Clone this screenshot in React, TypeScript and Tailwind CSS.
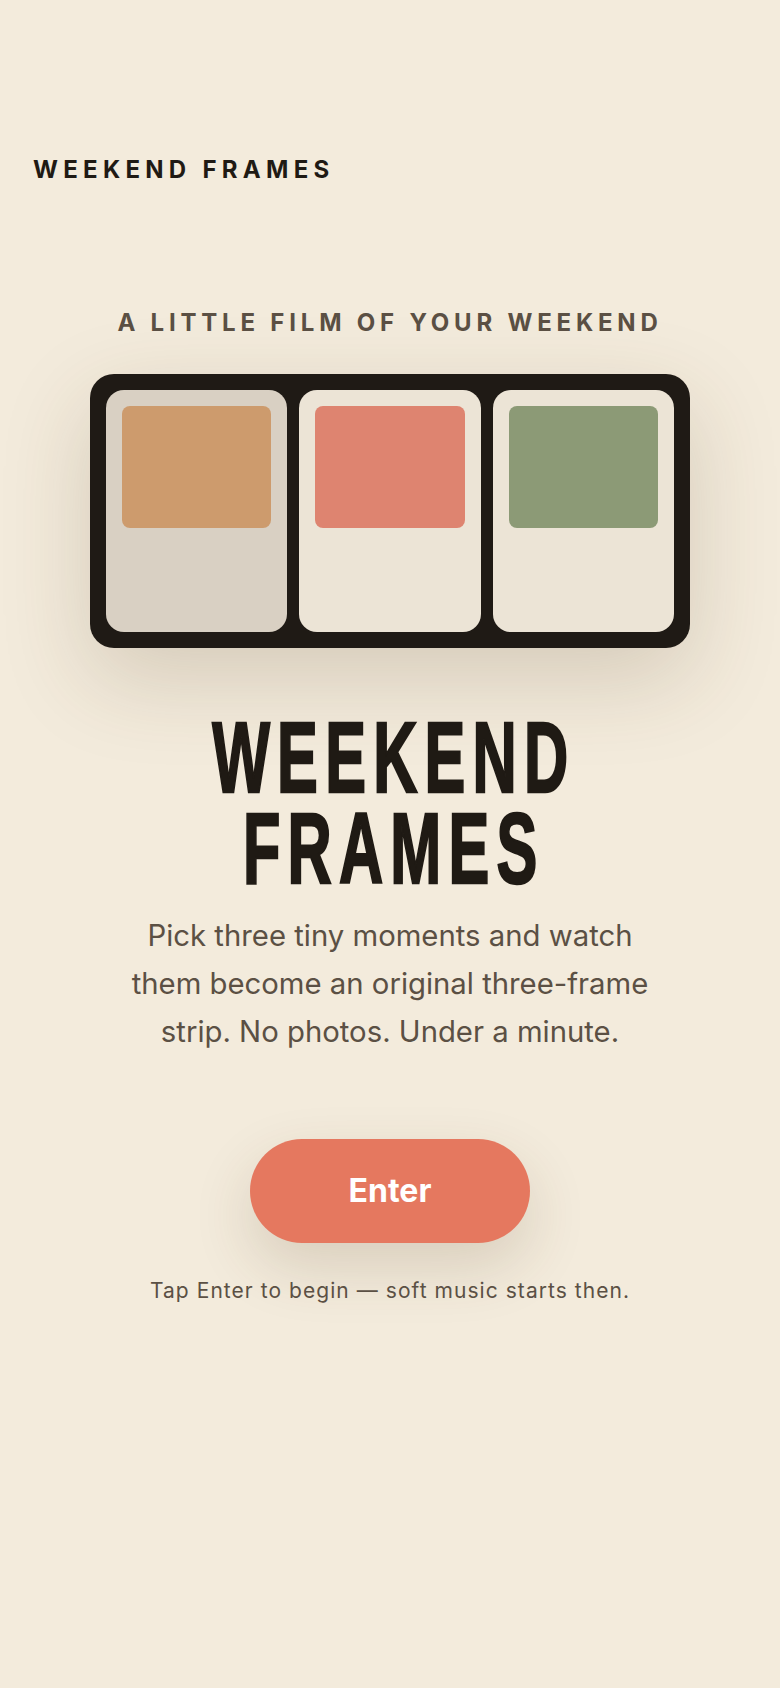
import React from 'react';

const frames = [
  { card: 'bg-[#d9d0c3]', swatch: 'bg-[#cd9b6d]' },
  { card: 'bg-[#ece4d6]', swatch: 'bg-[#de8470]' },
  { card: 'bg-[#ece4d6]', swatch: 'bg-[#8c9a76]' },
];

export default function App() {
  return (
    <div className="min-h-screen bg-[#f3ebdc] font-['Inter','Liberation_Sans',sans-serif] text-[#1f1a14]">
      {/* Top wordmark */}
      <header className="px-[33px] pt-[152px]">
        <p className="text-[24px] leading-[36px] font-bold tracking-[0.22em]">WEEKEND FRAMES</p>
      </header>

      <main className="flex flex-col items-center pb-[200px]">
        <p className="mt-[119px] text-[24px] leading-[32px] font-bold tracking-[0.2em] text-[#5b5044]">
          A LITTLE FILM OF YOUR WEEKEND
        </p>

        {/* Film strip */}
        <div className="mt-[35px] flex w-[600px] gap-[12px] rounded-[24px] bg-[#1f1a15] p-[16px] shadow-[0_30px_90px_rgba(80,55,25,0.18)]">
          {frames.map((f, i) => (
            <div key={i} className={`h-[242px] flex-1 rounded-[18px] p-[16px] ${f.card}`}>
              <div className={`h-[122px] rounded-[8px] ${f.swatch}`} />
            </div>
          ))}
        </div>

        <h1 className="mt-[64px] origin-center scale-x-[0.605] pl-[12px] text-center font-['Liberation_Sans',sans-serif] text-[101px] leading-[91px] font-bold tracking-[12px] [-webkit-text-stroke:2.5px_#1f1a14]">
          WEEKEND
          <br />
          FRAMES
        </h1>

        <p className="mt-[18px] max-w-[530px] text-center text-[29.3px] leading-[48px] text-[#5b5044]">
          Pick three tiny moments and watch them become an original three-frame strip. No photos. Under a minute.
        </p>

        <button className="mt-[83px] h-[104px] w-[280px] rounded-full bg-[#e5785f] text-[32px] font-bold text-white shadow-[0_24px_60px_rgba(80,55,25,0.16)]">
          Enter
        </button>

        <p className="mt-[34px] text-[21px] leading-[28px] tracking-[0.05em] text-[#5b5044]">
          Tap Enter to begin — soft music starts then.
        </p>
      </main>
    </div>
  );
}
